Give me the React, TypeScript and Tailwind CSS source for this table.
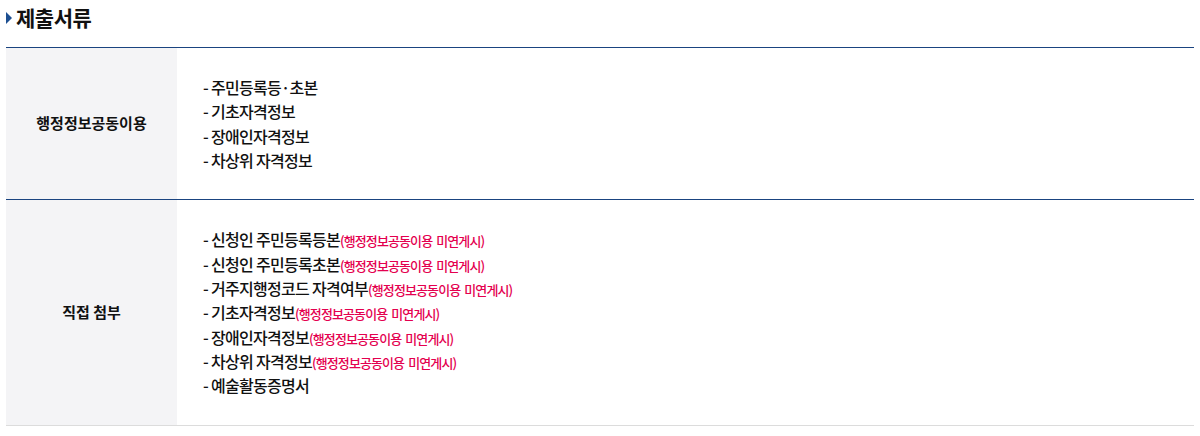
const ROWS = [
  {
    label: '행정정보공동이용',
    items: [
      { text: '주민등록등·초본' },
      { text: '기초자격정보' },
      { text: '장애인자격정보' },
      { text: '차상위 자격정보' },
    ],
  },
  {
    label: '직접 첨부',
    items: [
      { text: '신청인 주민등록등본', note: '(행정정보공동이용 미연게시)' },
      { text: '신청인 주민등록초본', note: '(행정정보공동이용 미연게시)' },
      { text: '거주지행정코드 자격여부', note: '(행정정보공동이용 미연게시)' },
      { text: '기초자격정보', note: '(행정정보공동이용 미연게시)' },
      { text: '장애인자격정보', note: '(행정정보공동이용 미연게시)' },
      { text: '차상위 자격정보', note: '(행정정보공동이용 미연게시)' },
      { text: '예술활동증명서' },
    ],
  },
];

export default function App() {
  return (
    <div
      className="w-[1200px] h-[436px] bg-white px-[6px] text-[#111]"
      style={{ fontFamily: '"Noto Sans CJK KR", "Noto Sans", sans-serif' }}
    >
      <div className="flex h-[47px] items-start pt-[3px]">
        <div className="flex items-center gap-[4px]">
          <svg width="6" height="12" viewBox="0 0 6 12" className="mt-[1px]">
            <path d="M0 0 L6 6 L0 12 Z" fill="#1d4f91" />
          </svg>
          <h2 className="text-[21px] font-bold leading-[28px] tracking-[-0.5px] text-[#111]">제출서류</h2>
        </div>
      </div>

      <div className="border-b border-[#dcdcdc]">
        {ROWS.map((row) => (
          <div key={row.label} className="flex border-t border-[#1a4480]">
            <div className="flex w-[171px] shrink-0 items-center justify-center bg-[#f4f4f6] text-[15px] font-bold">
              {row.label}
            </div>
            <ul className="flex-1 py-[27px] pl-[26px] text-[16px] font-medium leading-[24.35px] tracking-[-0.7px]">
              {row.items.map((item) => (
                <li key={item.text} className="h-[24.35px]">
                  - {item.text}
                  {item.note && (
                    <span className="text-[13px] leading-[12px] tracking-[-0.9px] [word-spacing:2px] text-[#e4004f]">
                      {item.note}
                    </span>
                  )}
                </li>
              ))}
            </ul>
          </div>
        ))}
      </div>
    </div>
  );
}
